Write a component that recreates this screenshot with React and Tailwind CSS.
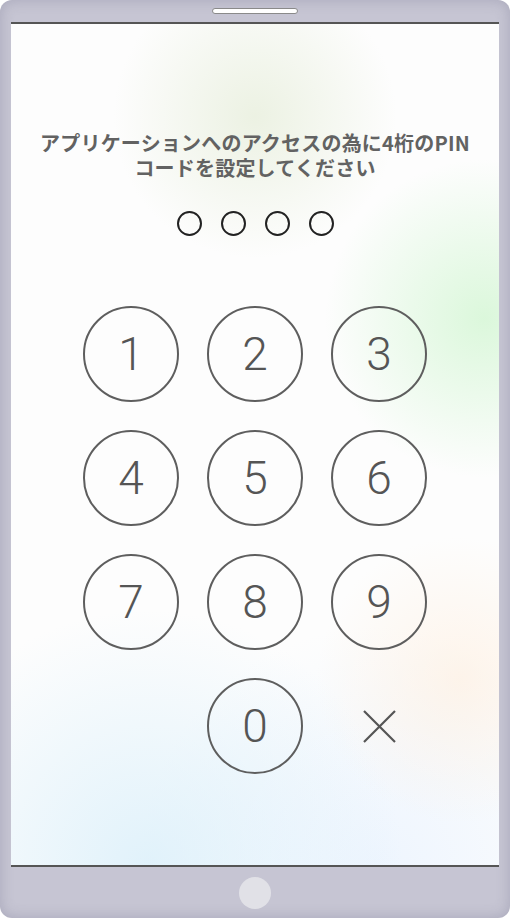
const KEYS = ['1', '2', '3', '4', '5', '6', '7', '8', '9']

function Key({ label }) {
  return (
    <button
      type="button"
      className="w-[96px] h-[96px] rounded-full border-2 border-[#5e5e5e] flex items-center justify-center text-[46px] font-light text-[#555] leading-none"
      style={{ fontFamily: 'Roboto, "Liberation Sans", sans-serif' }}
    >
      {label}
    </button>
  )
}

export default function App() {
  return (
    <div className="w-[510px] h-[918px] bg-[#c6c5d3] rounded-[12px] shadow-[inset_0_0_14px_rgba(80,80,110,0.25)] flex flex-col">
      <div className="h-[22px] shrink-0 flex justify-center pt-[8px]">
        <div className="w-[86px] h-[6px] rounded-full bg-white border border-[#8a8a8a]" />
      </div>

      <div
        className="mx-[11px] h-[845px] border-t-2 border-b-2 border-[#555] relative overflow-hidden flex flex-col items-center pt-[106px] bg-[#fdfdfd]"
        style={{
          backgroundImage:
            'radial-gradient(circle at 50% 11%, rgba(222,232,205,0.55), transparent 18%), radial-gradient(circle at 97% 35%, rgba(205,245,205,0.7), transparent 22%), radial-gradient(circle at 92% 78%, rgba(255,235,215,0.5), transparent 18%), radial-gradient(circle at 28% 100%, rgba(215,238,250,0.75), transparent 28%), radial-gradient(circle at 75% 100%, rgba(228,240,255,0.6), transparent 26%)',
        }}
      >
        <p
          className="text-center text-[20px] leading-[25px] font-bold text-[#626262] tracking-[0.2px]"
          style={{ fontFamily: '"Noto Sans CJK JP", "Noto Sans", sans-serif' }}
        >
          アプリケーションへのアクセスの為に4桁のPIN
          <br />
          コードを設定してください
        </p>

        <div className="flex gap-[19px] mt-[31px]">
          {[0, 1, 2, 3].map((i) => (
            <div key={i} className="w-[25px] h-[25px] rounded-full border-2 border-[#222]" />
          ))}
        </div>

        <div className="grid grid-cols-[96px_96px_96px] gap-[28px] mt-[70px]">
          {KEYS.map((k) => (
            <Key key={k} label={k} />
          ))}
          <div />
          <Key label="0" />
          <div className="flex items-center justify-center">
            <svg width="33" height="33" viewBox="0 0 33 33">
              <path d="M1 1 L32 32 M32 1 L1 32" stroke="#555" strokeWidth="2.2" />
            </svg>
          </div>
        </div>
      </div>

      <div className="flex-1 flex items-center justify-center">
        <div className="w-[32px] h-[32px] rounded-full bg-[#e1e1e7]" />
      </div>
    </div>
  )
}
